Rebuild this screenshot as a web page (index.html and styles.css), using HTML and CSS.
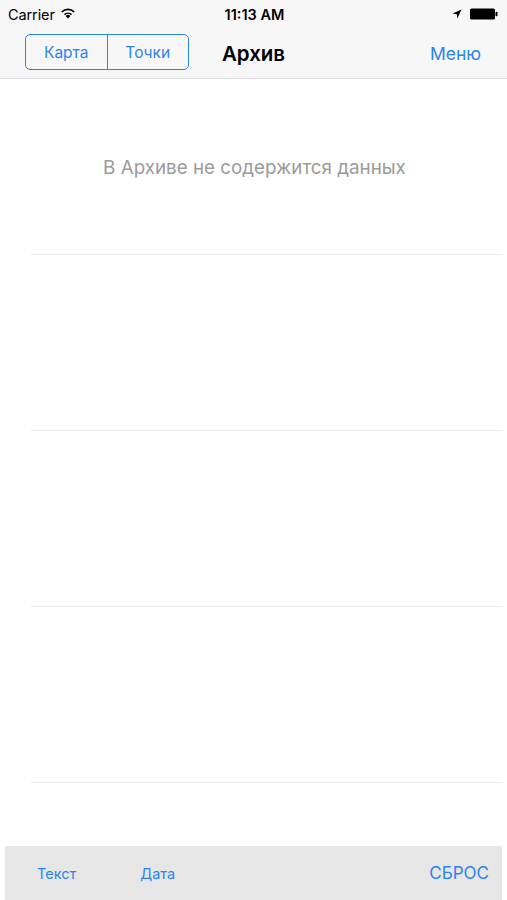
FILE: index.html
```html
<!DOCTYPE html>
<html lang="ru">
<head>
<meta charset="utf-8">
<title>Архив</title>
<link rel="stylesheet" href="styles.css">
</head>
<body>
<div class="screen">
  <header class="topbar">
    <div class="status">
      <div class="status-left">
        <span class="carrier">Carrier</span>
        <svg class="wifi" width="16" height="12" viewBox="0 0 16 12">
          <path d="M8 11.5 L5.6 8.9 A3.6 3.6 0 0 1 10.4 8.9 Z" fill="#000"/>
          <path d="M3.9 7.1 A5.9 5.9 0 0 1 12.1 7.1 L11.0 8.3 A4.3 4.3 0 0 0 5.0 8.3 Z" fill="#000"/>
          <path d="M1.2 4.4 A9.6 9.6 0 0 1 14.8 4.4 L13.6 5.6 A7.9 7.9 0 0 0 2.4 5.6 Z" fill="#000"/>
        </svg>
      </div>
      <div class="time">11:13 AM</div>
      <div class="status-right">
        <svg class="loc" width="10" height="10" viewBox="0 0 10 10">
          <path d="M9.5 0.5 L0.5 4.6 L4.8 5.2 L5.4 9.5 Z" fill="#000"/>
        </svg>
        <svg class="battery" width="28" height="12" viewBox="0 0 28 12">
          <rect x="0" y="0.5" width="25" height="11" rx="1.5" fill="#000"/>
          <rect x="25.5" y="3.8" width="2" height="4.4" rx="0.8" fill="#000"/>
        </svg>
      </div>
    </div>
    <nav class="navbar">
      <div class="segmented">
        <span class="seg">Карта</span>
        <span class="seg">Точки</span>
      </div>
      <h1 class="title">Архив</h1>
      <span class="menu">Меню</span>
    </nav>
  </header>
  <main class="list">
    <div class="row row-empty"><span class="empty">В Архиве не содержится данных</span></div>
    <div class="row"></div>
    <div class="row"></div>
    <div class="row"></div>
    <div class="row row-last"></div>
  </main>
  <footer class="toolbar">
    <span class="tb-item">Текст</span>
    <span class="tb-item">Дата</span>
    <span class="tb-spacer"></span>
    <span class="tb-item tb-reset">СБРОС</span>
  </footer>
</div>
</body>
</html>
```

FILE: styles.css
```css
* { box-sizing: border-box; }
html, body { margin: 0; padding: 0; }
body {
  width: 507px;
  height: 900px;
  background: #fff;
  font-family: Inter, Roboto, "Liberation Sans", sans-serif;
  color: #000;
  overflow: hidden;
}
.screen {
  height: 900px;
  display: flex;
  flex-direction: column;
}
.topbar {
  background: #f7f7f7;
  border-bottom: 1px solid #dcdcdc;
}
.status {
  height: 28px;
  display: grid;
  grid-template-columns: 1fr auto 1fr;
  align-items: center;
  padding: 0 9px 0 8px;
  font-size: 14px;
}
.status-left { display: flex; align-items: center; gap: 5px; }
.carrier { font-size: 14.5px; letter-spacing: -0.1px; }
.wifi { margin-top: -2px; }
.time { font-weight: 600; font-size: 14.5px; padding-left: 3px; }
.status-right { display: flex; justify-content: flex-end; align-items: center; gap: 8px; }
.navbar {
  height: 50px;
  display: grid;
  grid-template-columns: 1fr auto 1fr;
  align-items: center;
  padding: 0 26px 0 25px;
}
.segmented {
  justify-self: start;
  display: flex;
  border: 1.5px solid #2a84ee;
  border-radius: 5px;
  height: 36px;
  width: 164px;
  margin-top: -2px;
}
.seg {
  flex: 1;
  display: flex;
  align-items: center;
  justify-content: center;
  color: #2a84ee;
  font-size: 15.5px;
}
.seg + .seg { border-left: 1.5px solid #2a84ee; }
.title {
  margin: 0;
  text-align: center;
  font-size: 20.5px;
  font-weight: 600;
  padding-left: 1px;
}
.menu {
  justify-self: end;
  color: #2a84ee;
  font-size: 17.5px;
}
.list {
  flex: 1;
  display: flex;
  flex-direction: column;
}
.row {
  height: 176px;
  flex: none;
  margin-left: 31px;
  margin-right: 5px;
  border-bottom: 1px solid #ececec;
}
.row-last { flex: 1; height: auto; border-bottom: none; }
.row-empty {
  margin-left: 0;
  display: flex;
  align-items: center;
  justify-content: center;
  position: relative;
  border-bottom: none;
}
.row-empty::after {
  content: "";
  position: absolute;
  left: 31px;
  right: 0;
  bottom: 0;
  border-bottom: 1px solid #ececec;
}
.empty {
  color: #9b9b9b;
  font-size: 18.8px;
  margin-left: 7px;
  margin-top: 1px;
}
.toolbar {
  height: 54px;
  margin: 0 5px;
  background: #e6e6e6;
  display: flex;
  align-items: center;
  padding: 0 13px 0 32px;
  gap: 64px;
}
.tb-item {
  color: #2a84ee;
  font-size: 14.5px;
}
.tb-spacer { flex: 1; }
.tb-reset { font-size: 17px; }
```
